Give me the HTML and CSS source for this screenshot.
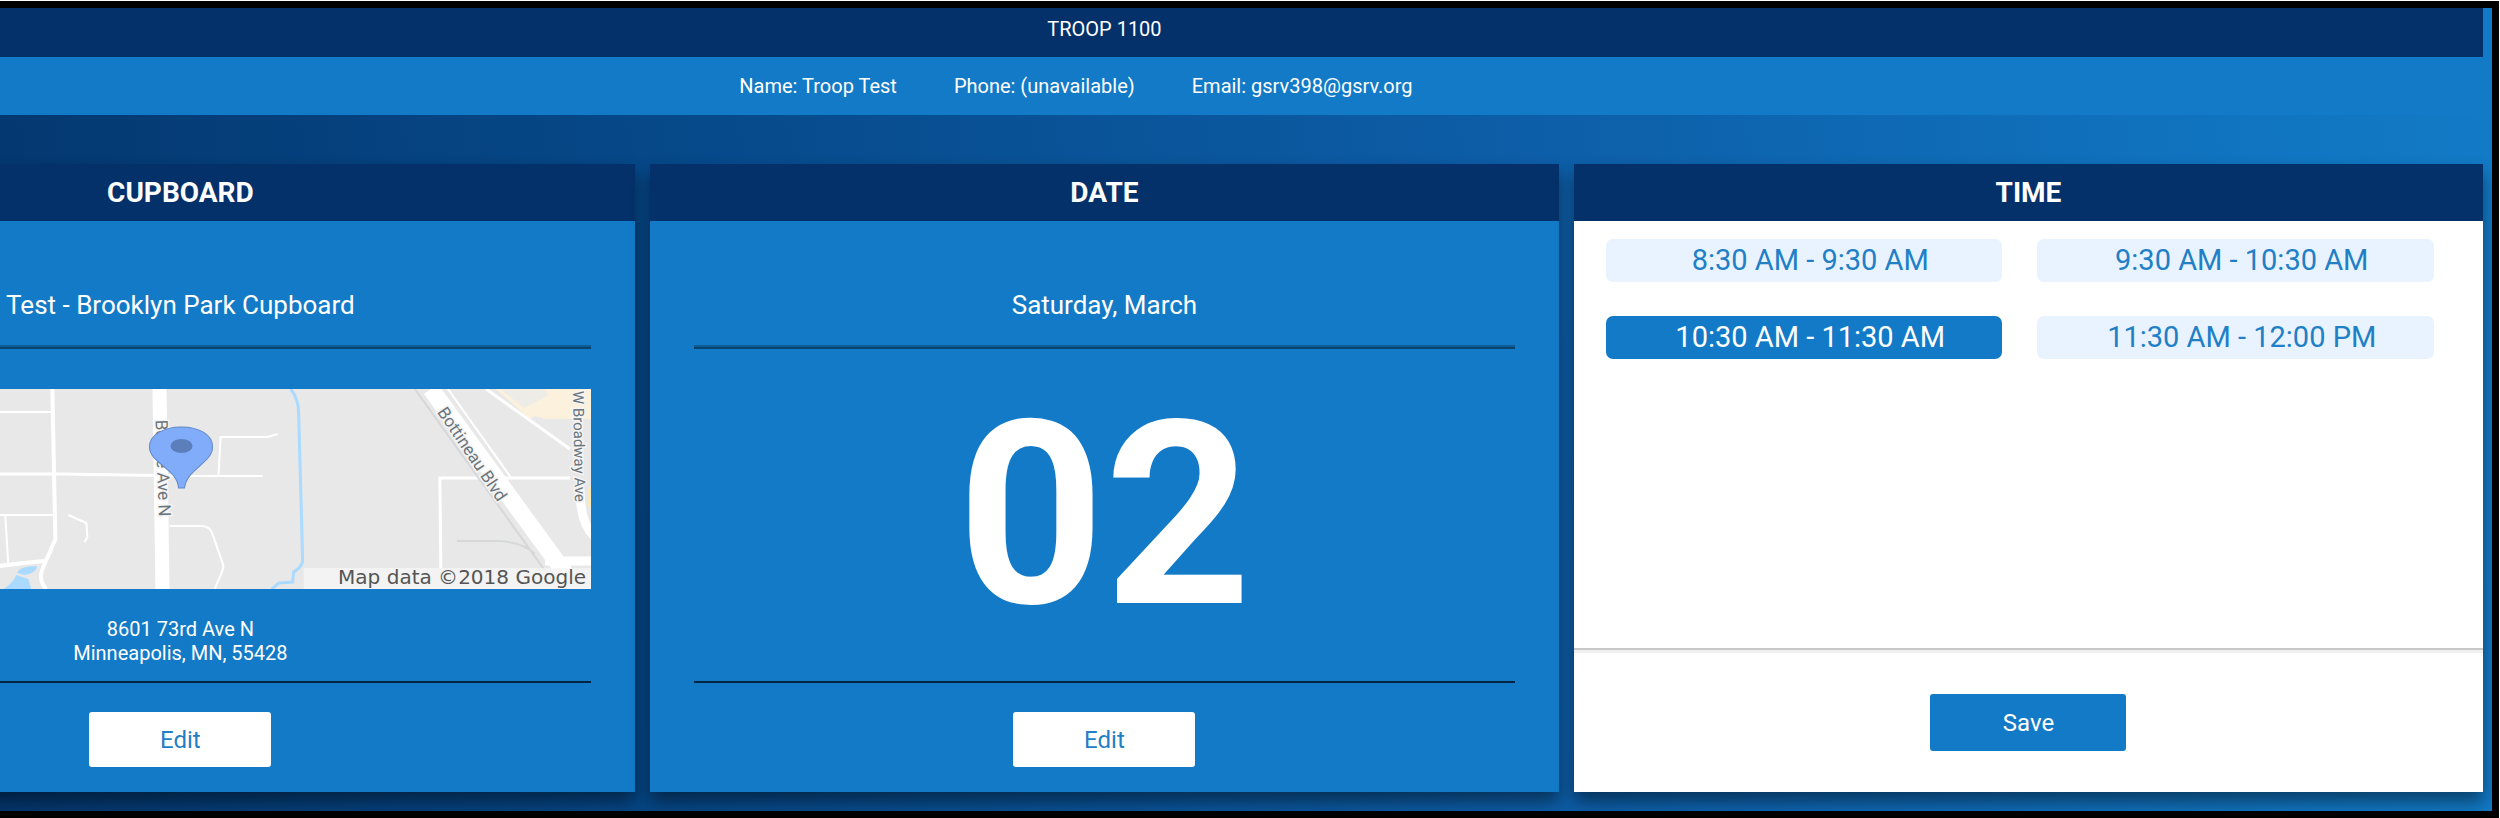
FILE: index.html
```html
<!DOCTYPE html>
<html lang="en">
<head>
<meta charset="utf-8">
<title>Troop 1100</title>
<link rel="stylesheet" href="styles.css">
</head>
<body>
<div class="frame">
  <div class="page">
    <header class="troop-title">TROOP 1100</header>
    <div class="contact">
      <span class="contact-item">Name: Troop Test</span>
      <span class="contact-item">Phone: (unavailable)</span>
      <span class="contact-item">Email: gsrv398@gsrv.org</span>
    </div>
    <main class="cards">
      <section class="card">
        <h2 class="card-title">CUPBOARD</h2>
        <div class="card-body">
          <p class="summary">Test - Brooklyn Park Cupboard</p>
          <div class="content">
            <svg class="map" viewBox="-229 0 820 200" preserveAspectRatio="xMaxYMid slice" role="img" aria-label="Map">
              <rect x="-229" width="820" height="200" fill="#e8e8e8"/>
              <path d="M496 0H591V30H545L535 27L530 30Z" fill="#fbf1dc"/>
              <path d="M500 0L524 19L549 6L543 0Z" fill="#eeece6"/>
              <path d="M588 100L591 97V118H588Z" fill="#fbe9bd"/>
              <path d="M4 200Q14 194 17 186L29 190L32 200ZM18 184Q20 177 38 177Q37 184 25 186Z" fill="#aadaff"/>
              <g fill="none" stroke="#fff" stroke-width="2">
                <path d="M-229 23H52M-229 126H54M6 126L9 176M69 126L87 134L88 148L85 153M219 86L221 48H268L278 45M190 87H263M170 137H203Q211 138 213 145L224 177L222 184L215 200"/>
                <path d="M-229 85H60L190 87M441 180L440 89H570M486 0L570 60" stroke-width="3"/>
                <path d="M53 0L56 150Q52 160 43 180Q39 192 47 200M-10 178L25 174L45 172" stroke-width="4"/>
                <path d="M160 0L163 200" stroke-width="14"/>
                <path d="M431 0L568 188" stroke-width="17"/>
                <path d="M448 0L512 90"/>
                <path d="M580 100Q580 135 595 148" stroke-width="9"/>
                <path d="M545 172H591" stroke-width="9"/>
              </g>
              <path d="M291 0Q299 10 299 25L303 172Q302 178 294 183L293 193L279 194L272 200" fill="none" stroke="#aadaff" stroke-width="3"/>
              <path d="M415 0L551 190M457 152H500Q525 154 535 165" fill="none" stroke="#d5d7d8" stroke-width="2"/>
              <g class="road-name">
                <text transform="translate(156 31) rotate(88)">Boone Ave N</text>
                <text transform="translate(437 23) rotate(56)">Bottineau Blvd</text>
                <text class="road-minor" transform="translate(573 2) rotate(89)">W Broadway Ave</text>
              </g>
              <rect x="304" y="179" width="287" height="21" fill="#f5f5f5" fill-opacity=".85"/>
              <text class="map-credit" x="586" y="195" text-anchor="end">Map data ©2018 Google</text>
              <path d="M179 99H185C187 80 213 74 213 58C213 46 200 38 182 38C164 38 150 46 150 58C150 74 178 80 179 99Z" fill="#80acfa" stroke="#6288c8"/>
              <ellipse cx="182" cy="57" rx="11" ry="7" fill="#5c7fbc"/>
            </svg>
            <address class="address">8601 73rd Ave N<br>Minneapolis, MN, 55428</address>
          </div>
          <div class="actions"><button class="edit" type="button">Edit</button></div>
        </div>
      </section>
      <section class="card">
        <h2 class="card-title">DATE</h2>
        <div class="card-body">
          <p class="summary">Saturday, March</p>
          <div class="content"><div class="day">02</div></div>
          <div class="actions"><button class="edit" type="button">Edit</button></div>
        </div>
      </section>
      <section class="card card-light">
        <h2 class="card-title">TIME</h2>
        <div class="slots">
          <button class="slot" type="button">8:30 AM - 9:30 AM</button>
          <button class="slot" type="button">9:30 AM - 10:30 AM</button>
          <button class="slot slot-selected" type="button" aria-pressed="true">10:30 AM - 11:30 AM</button>
          <button class="slot" type="button">11:30 AM - 12:00 PM</button>
        </div>
        <div class="save-bar"><button class="save" type="button">Save</button></div>
      </section>
    </main>
  </div>
</div>
</body>
</html>
```
FILE: styles.css
```css
* { box-sizing: border-box; }
body {
  margin: 0;
  background: #fff;
  font-family: Roboto, "Liberation Sans", sans-serif;
  color: #fff;
}
.frame {
  min-height: calc(100vh - 1px);
  margin: 1px 1px 0 0;
  border: 7px solid #000;
  border-left: 0;
  overflow: hidden;
  display: flex;
  background: linear-gradient(86deg, #04376f 0%, #064888 27%, #0d5ea8 62%, #1176c2 92%, #127ac6 100%);
}
.page {
  flex: 1;
  margin: 0 9px 0 -11%;
  display: flex;
  flex-direction: column;
}
.troop-title {
  height: 49px;
  background: #04316a;
  font-size: 20px;
  line-height: 42px;
  text-align: center;
}
.contact {
  display: flex;
  justify-content: center;
  height: 58px;
  background: #127ac6;
  font-size: 20px;
  line-height: 58px;
}
.contact-item { margin-right: 57px; }
.cards {
  flex: 1;
  display: grid;
  grid-template-columns: repeat(3, 1fr);
  gap: 15px;
  padding: 49px 0 19px;
}
.card {
  display: flex;
  flex-direction: column;
  background: #127ac6;
  box-shadow: 0 10px 16px rgba(0, 0, 0, .45);
}
.card-light { background: #fff; }
.card-title {
  margin: 0;
  height: 57px;
  background: #04316a;
  font-size: 28px;
  font-weight: 700;
  line-height: 57px;
  text-align: center;
}
.card-body {
  flex: 1;
  display: flex;
  flex-direction: column;
  padding: 0 44px;
}
.summary {
  margin: 0;
  height: 128px;
  padding-top: 68px;
  border-bottom: 2px solid #06446f;
  box-shadow: inset 0 -2px 0 #0d5c96;
  font-size: 26px;
  line-height: 32px;
  text-align: center;
}
.content {
  flex: 1;
  padding-top: 40px;
}
.map {
  display: block;
  width: 100%;
  height: 200px;
}
.road-name {
  fill: #6b747a;
  font-size: 17px;
  stroke: #f4f4f4;
  stroke-width: 3px;
  paint-order: stroke;
}
.road-minor { font-size: 15px; }
.map-credit { fill: #555; font: 20px "DejaVu Sans", sans-serif; }
.address {
  padding-top: 28px;
  font-size: 20px;
  font-style: normal;
  line-height: 24px;
  text-align: center;
}
.day {
  font-size: 256px;
  font-weight: 700;
  line-height: 254px;
  text-align: center;
}
.actions {
  display: flex;
  justify-content: center;
  height: 111px;
  padding-top: 29px;
  border-top: 2px solid #04243f;
}
.edit, .save {
  width: 182px;
  height: 55px;
  padding: 0;
  border: 0;
  border-radius: 3px;
  background: #fff;
  color: #217fc6;
  font: 24px Roboto, "Liberation Sans", sans-serif;
}
.slots {
  flex: 1;
  display: grid;
  grid-template-columns: 1fr 1fr;
  align-content: start;
  gap: 34px 35px;
  padding: 18px 49px 0 32px;
}
.slot {
  height: 43px;
  padding: 0 0 2px 12px;
  border: 0;
  border-radius: 7px;
  background: #e8f3ff;
  color: #217fc6;
  font: 29px Roboto, "Liberation Sans", sans-serif;
}
.slot-selected { background: #127ac6; color: #fff; }
.save-bar {
  display: flex;
  justify-content: center;
  height: 144px;
  padding-top: 44px;
  border-top: 2px solid #c8c8c8;
  box-shadow: inset 0 3px 0 #f0f0f0;
}
.save {
  width: 196px;
  height: 57px;
  background: #127ac6;
  color: #fff;
  font-size: 24px;
}
```
